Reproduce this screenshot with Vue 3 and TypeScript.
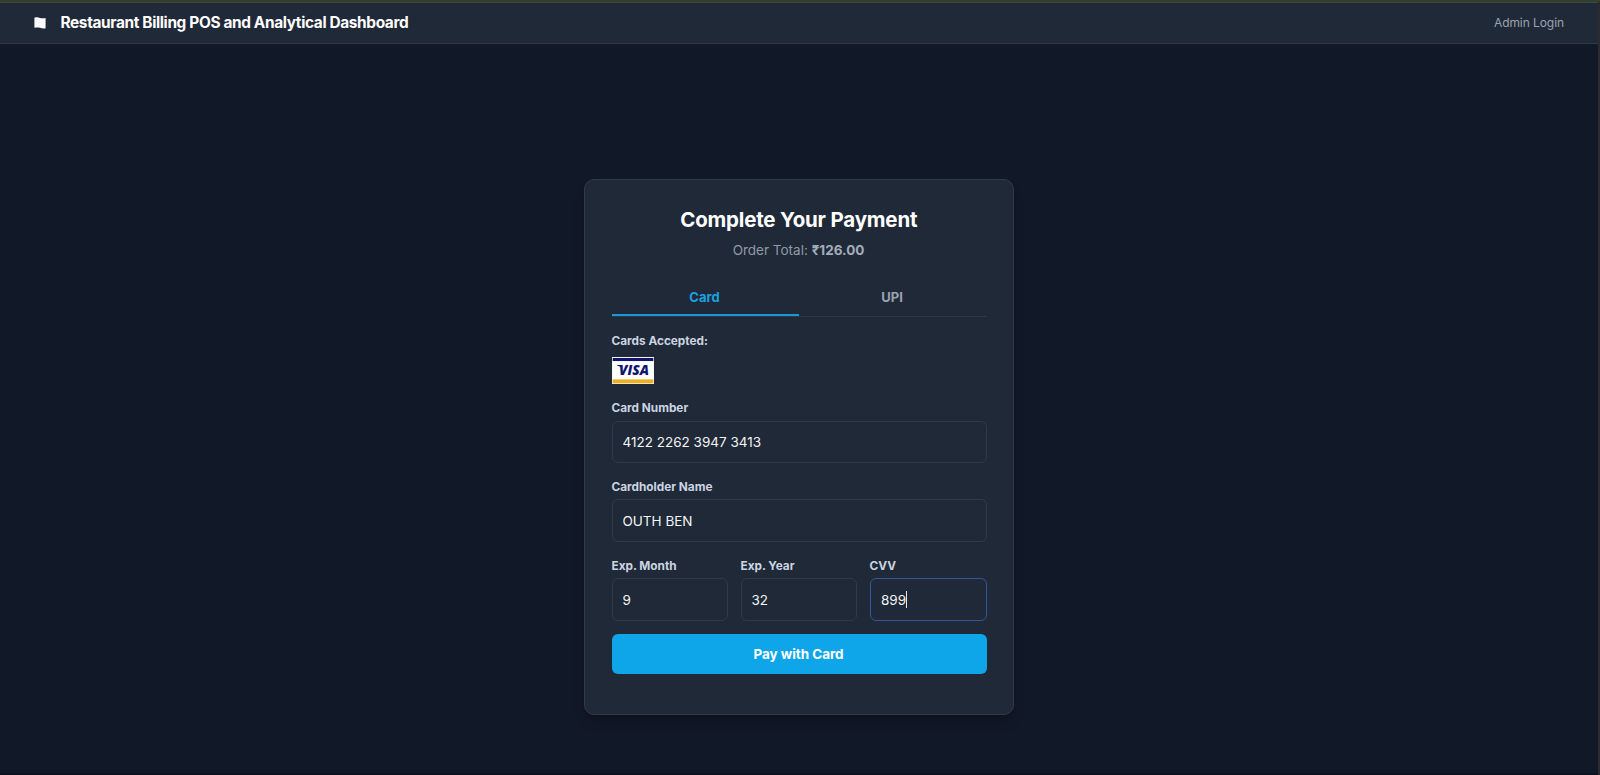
<script setup lang="ts">
import { ref } from 'vue'

type Tab = 'card' | 'upi'

const activeTab = ref<Tab>('card')
const cardNumber = ref('4122 2262 3947 3413')
const cardholder = ref('OUTH BEN')
const month = ref('9')
const year = ref('32')
const cvv = ref('899')
</script>

<template>
  <div class="window">
    <div class="page">
      <header class="topbar">
        <svg class="flag" viewBox="0 0 12 12" width="12" height="12">
          <path d="M0.400 0.800C2.600 0 4.200 0.400 6 0.900S9.700 1.400 11.600 1V11.200C9.600 11.600 7.800 11.300 6 10.800S2.400 10.400 0.400 10.800Z" fill="#f8fafc" />
        </svg>
        <h1 class="brand">Restaurant Billing POS and Analytical Dashboard</h1>
        <a class="login">Admin Login</a>
      </header>

      <main class="content">
        <section class="card">
          <h2 class="title">Complete Your Payment</h2>
          <p class="total">Order Total: <strong>₹126.00</strong></p>

          <nav class="tabs">
            <button class="tab" :class="{ active: activeTab === 'card' }" @click="activeTab = 'card'">Card</button>
            <button class="tab" :class="{ active: activeTab === 'upi' }" @click="activeTab = 'upi'">UPI</button>
          </nav>

          <div class="label accepted">Cards Accepted:</div>
          <svg class="visa" viewBox="0 0 42 27" width="42" height="27">
            <rect width="42" height="27" fill="#f4f5fa" />
            <rect x="0.700" y="1" width="40.600" height="3.200" fill="#10156d" />
            <rect x="0.700" y="4.200" width="40.600" height="18.200" fill="#fff" />
            <rect x="0.700" y="22.400" width="40.600" height="3.900" fill="#edb021" />
            <path d="M5 8H9L10 11Q8 9 5 8.500Z" fill="#10156d" />
            <text class="visa-name" x="7" y="18.100" textLength="30" lengthAdjust="spacingAndGlyphs">VISA</text>
          </svg>

          <label class="field number">
            <span class="label">Card Number</span>
            <input v-model="cardNumber" class="input" />
          </label>
          <label class="field holder">
            <span class="label">Cardholder Name</span>
            <input v-model="cardholder" class="input tall" />
          </label>
          <div class="row">
            <label class="field">
              <span class="label">Exp. Month</span>
              <input v-model="month" class="input tall" />
            </label>
            <label class="field">
              <span class="label">Exp. Year</span>
              <input v-model="year" class="input tall" />
            </label>
            <label class="field">
              <span class="label">CVV</span>
              <span class="focus-wrap">
                <input v-model="cvv" class="input tall focused" />
                <i class="caret"></i>
              </span>
            </label>
          </div>
          <button class="pay">Pay with Card</button>
        </section>
      </main>
    </div>
  </div>
</template>

<style>
body {
  background: #111827;
}
</style>

<style scoped>
* {
  box-sizing: border-box;
}
.window {
  width: 1600px;
  height: 775px;
  overflow: hidden;
  padding-right: 2px;
  border-top: 2px solid #34402c;
  background: #2b2a2e;
  font-family: Inter, 'Liberation Sans', sans-serif;
}
.page {
  height: 773px;
  background: #111827;
  border-bottom: 2px solid #0e121f;
}
.topbar {
  height: 42px;
  padding: 0 34px 1px 34px;
  display: flex;
  align-items: center;
  background: #1f2937;
  border-top: 1px solid #3a4743;
  border-bottom: 1px solid #2e3a49;
}
.flag {
  margin-right: 14px;
}
.brand {
  margin: 0;
  padding-left: 0.500px;
  font-size: 15.400px;
  font-weight: 700;
  letter-spacing: -0.360px;
  color: #fff;
  white-space: nowrap;
}
.login {
  margin-left: auto;
  font-size: 12px;
  letter-spacing: -0.070px;
  color: #9ca3af;
}
.content {
  padding-top: 135px;
  padding-left: 584px;
}
.card {
  width: 430px;
  height: 536px;
  padding: 0 26px 0 27px;
  background: #1f2937;
  border: 1px solid #303b49;
  border-radius: 10px;
  box-shadow: 0 9px 14px -3px rgba(0, 0, 0, 0.2), 0 3px 5px -2px rgba(0, 0, 0, 0.15);
}
.title {
  margin: 25px 0 0;
  padding-right: 1.500px;
  height: 30px;
  line-height: 30px;
  font-size: 20.500px;
  font-weight: 700;
  letter-spacing: -0.180px;
  text-align: center;
  color: #fff;
}
.total {
  margin: 5px 0 0;
  padding-right: 2px;
  height: 20px;
  line-height: 20px;
  font-size: 13.500px;
  text-align: center;
  color: #9099a7;
}
.total strong {
  font-weight: 700;
  color: #a3acba;
}
.tabs {
  display: grid;
  grid-template-columns: 187px 188px;
  height: 37px;
  margin-top: 20px;
  border-bottom: 1px solid #2d3847;
}
.tab {
  height: 36px;
  padding: 0 2px 0 0;
  border: 0;
  border-bottom: 2px solid transparent;
  background: none;
  font: 700 13px/34px Inter, sans-serif;
  letter-spacing: 0.050px;
  color: #9ca3af;
}
.tab.active {
  color: #1ba1e0;
  border-bottom-color: #1799d6;
}
.label {
  display: block;
  height: 16px;
  line-height: 16px;
  font-size: 11.800px;
  font-weight: 700;
  text-indent: -0.500px;
  color: #cbd5e1;
}
.accepted {
  margin-top: 16px;
}
.visa {
  display: block;
  margin-top: 8px;
}
.visa-name {
  font: italic 800 13.500px 'Open Sans', sans-serif;
  fill: #10156d;
}
.field {
  display: block;
}
.number {
  margin-top: 16px;
}
.holder {
  margin-top: 16px;
}
.input {
  display: block;
  width: 100%;
  height: 42px;
  margin-top: 5px;
  padding: 0 9.500px;
  border: 1px solid #303b49;
  border-radius: 6px;
  outline: 0;
  background: #1f2937;
  font: 400 13.500px Inter, sans-serif;
  color: #f3f4f6;
}
.input.tall {
  height: 43px;
  margin-top: 4px;
}
.row {
  display: grid;
  grid-template-columns: 116px 116px 117px;
  gap: 13px;
  margin-top: 16px;
}
.focus-wrap {
  display: block;
  position: relative;
}
.input.focused {
  padding-left: 10px;
  border-color: #36549a;
}
.caret {
  position: absolute;
  left: 36px;
  top: 13px;
  width: 1px;
  height: 17px;
  background: #e5e7eb;
}
.pay {
  display: block;
  width: 100%;
  height: 40px;
  margin-top: 13px;
  padding: 0 2px 0 0;
  border: 0;
  border-radius: 6px;
  background: #0ea5e9;
  font: 700 13.500px Inter, sans-serif;
  letter-spacing: -0.050px;
  color: #fff;
}
</style>
